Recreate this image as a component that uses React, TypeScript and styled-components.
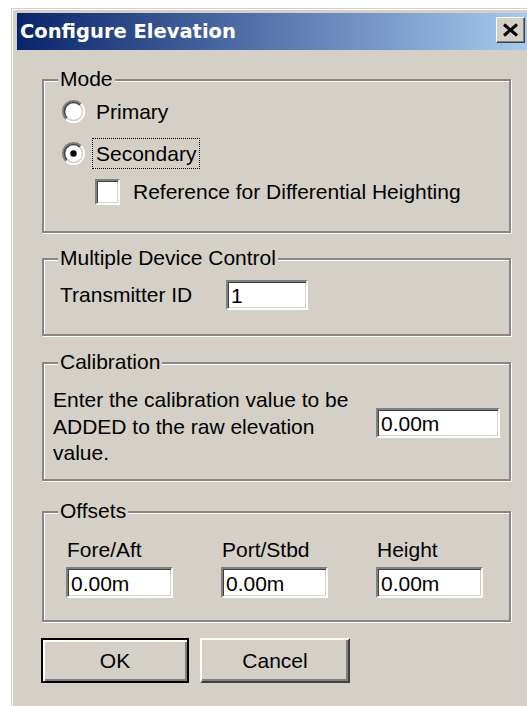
import React from 'react'
import styled, { createGlobalStyle } from 'styled-components'

const FACE = '#d4d0c8'
const SHADOW = '#808080'
const DARK = '#404040'

const GlobalStyle = createGlobalStyle`
  html, body {
    margin: 0;
    padding: 0;
    background: #fff;
    overflow: hidden;
  }
  body {
    font-family: "Liberation Sans", Arial, sans-serif;
    font-size: 21px;
    color: #000;
  }
`

const Dialog = styled.div`
  box-sizing: border-box;
  width: 524px;
  min-height: 720px;
  margin: 8px 0 0 11px;
  padding: 5px 6px 0;
  background: ${FACE};
  box-shadow: inset 1px 1px 0 ${FACE}, inset 2px 2px 0 #fff;
`

const TitleBar = styled.div`
  display: flex;
  align-items: flex-start;
  height: 37px;
  padding: 0 4px 0 3px;
  background: linear-gradient(to right, #0a246a, #a6caf0);
`

const TitleText = styled.span`
  align-self: center;
  font-family: "DejaVu Sans", Tahoma, sans-serif;
  font-weight: bold;
  font-size: 19.5px;
  color: #fff;
`

const CloseButton = styled.div`
  box-sizing: border-box;
  display: flex;
  align-items: center;
  justify-content: center;
  width: 29px;
  height: 26px;
  margin: 4px 0 0 auto;
  background: ${FACE};
  border: 1px solid;
  border-color: #fff ${DARK} ${DARK} #fff;
  box-shadow: inset -1px -1px 0 ${SHADOW};
`

const Content = styled.div`
  display: flex;
  flex-direction: column;
  padding: 29px 0 0 25px;
`

const GroupBox = styled.div<{ $height: number; $gap?: number }>`
  position: relative;
  box-sizing: border-box;
  width: 469px;
  height: ${(p) => p.$height}px;
  margin-top: ${(p) => p.$gap ?? 0}px;
  border: 2px solid #878787;
  box-shadow: inset 1px 1px 0 #fff, 1px 1px 0 #fff;
`

const Legend = styled.span`
  position: absolute;
  top: -13px;
  left: 14px;
  padding: 0 2px;
  line-height: 22px;
  background: ${FACE};
`

const ModeBody = styled.div`
  padding: 9px 0 0 18px;
`

const OptionRow = styled.div<{ $height: number; $indent?: number }>`
  display: flex;
  align-items: center;
  height: ${(p) => p.$height}px;
  padding-left: ${(p) => p.$indent ?? 0}px;
`

const OptionLabel = styled.span<{ $focused?: boolean }>`
  box-sizing: border-box;
  margin-left: 7px;
  padding: 0 3px 0 3px;
  line-height: 29px;
  border: 1px dotted ${(p) => (p.$focused ? '#000' : 'transparent')};
`

const CheckLabel = styled.span`
  margin-left: 13px;
`

const CheckBox = styled.div`
  box-sizing: border-box;
  width: 25px;
  height: 26px;
  background: #fff;
  border: 2px solid;
  border-color: ${SHADOW} #fff #fff ${SHADOW};
  box-shadow: inset 1px 1px 0 ${DARK}, inset -1px -1px 0 ${FACE};
`

const FieldRow = styled.div`
  display: flex;
  align-items: center;
  padding: 20px 0 0 16px;
`

const FieldLabel = styled.span<{ $width: number }>`
  width: ${(p) => p.$width}px;
`

const TextBox = styled.input<{ $width: number; $height?: number }>`
  box-sizing: border-box;
  width: ${(p) => p.$width}px;
  height: ${(p) => p.$height ?? 30}px;
  margin: 0;
  padding: 2px 0 0 3px;
  font-family: "Liberation Sans", Arial, sans-serif;
  font-size: 21px;
  color: #000;
  background: #fff;
  border: 2px solid;
  border-color: ${SHADOW} #fff #fff ${SHADOW};
  box-shadow: inset 1px 1px 0 ${DARK}, inset -1px -1px 0 ${FACE};
  outline: none;
`

const CalibrationRow = styled.div`
  display: flex;
  align-items: flex-start;
  padding: 23px 9px 0 9px;
`

const CalibrationText = styled.div`
  line-height: 26.5px;
`

const CalibrationInput = styled(TextBox)`
  margin-top: 21px;
  margin-left: auto;
`

const OffsetColumns = styled.div`
  display: flex;
  gap: 48px;
  padding: 24px 0 0 22px;
`

const OffsetColumn = styled.div`
  display: flex;
  flex-direction: column;
  width: 107px;
`

const OffsetLabel = styled.span`
  padding-left: 1px;
  line-height: 26px;
`

const OffsetInput = styled(TextBox)`
  margin-top: 4px;
`

const ButtonRow = styled.div`
  display: flex;
  gap: 11px;
  margin: 16px 0 0 -1px;
`

const Button = styled.button<{ $width: number; $default?: boolean }>`
  box-sizing: border-box;
  width: ${(p) => p.$width}px;
  height: 45px;
  padding: 0;
  font-family: "Liberation Sans", Arial, sans-serif;
  font-size: 21px;
  color: #000;
  background: ${FACE};
  border: 2px solid;
  border-color: ${(p) => (p.$default ? '#000' : `#fff ${DARK} ${DARK} #fff`)};
  box-shadow: ${(p) =>
    p.$default
      ? `inset 2px 2px 0 #fff, inset -2px -2px 0 ${SHADOW}`
      : `inset -2px -2px 0 ${SHADOW}`};
`

const Radio = ({ checked }: { checked?: boolean }) => {
  const c = 11.5
  // half ring: lower-left to upper-right through the top-left side (or the other half)
  const arc = (r: number, topLeft: boolean) => {
    const d = r * Math.SQRT1_2
    const a = topLeft ? [c - d, c + d] : [c + d, c - d]
    const b = topLeft ? [c + d, c - d] : [c - d, c + d]
    return `M${a[0]} ${a[1]} A${r} ${r} 0 0 1 ${b[0]} ${b[1]}`
  }
  return (
    <svg width="23" height="23" viewBox="0 0 23 23">
      <circle cx={c} cy={c} r={9.5} fill="#fff" />
      <path d={arc(10.5, true)} stroke={SHADOW} strokeWidth="2" fill="none" />
      <path d={arc(9, true)} stroke={DARK} strokeWidth="1.5" fill="none" />
      <path d={arc(10.5, false)} stroke="#fff" strokeWidth="2" fill="none" />
      <path d={arc(9, false)} stroke={FACE} strokeWidth="1.5" fill="none" />
      {checked && <circle cx={c} cy={c} r={3.2} fill="#000" />}
    </svg>
  )
}

const offsets = ['Fore/Aft', 'Port/Stbd', 'Height']

export default function App() {
  return (
    <>
      <GlobalStyle />
      <Dialog>
        <TitleBar>
          <TitleText>Configure Elevation</TitleText>
          <CloseButton>
            <svg width="17" height="14" viewBox="0 0 17 14">
              <path d="M2 1.5 L15 12.5 M15 1.5 L2 12.5" stroke="#000" strokeWidth="3" />
            </svg>
          </CloseButton>
        </TitleBar>

        <Content>
          <GroupBox $height={154}>
            <Legend>Mode</Legend>
            <ModeBody>
              <OptionRow $height={42}>
                <Radio />
                <OptionLabel>Primary</OptionLabel>
              </OptionRow>
              <OptionRow $height={42}>
                <Radio checked />
                <OptionLabel $focused>Secondary</OptionLabel>
              </OptionRow>
              <OptionRow $height={36} $indent={33}>
                <CheckBox />
                <CheckLabel>Reference for Differential Heighting</CheckLabel>
              </OptionRow>
            </ModeBody>
          </GroupBox>

          <GroupBox $height={78} $gap={25}>
            <Legend>Multiple Device Control</Legend>
            <FieldRow>
              <FieldLabel $width={166}>Transmitter ID</FieldLabel>
              <TextBox $width={82} defaultValue="1" />
            </FieldRow>
          </GroupBox>

          <GroupBox $height={119} $gap={26}>
            <Legend>Calibration</Legend>
            <CalibrationRow>
              <CalibrationText>
                Enter the calibration value to be
                <br />
                ADDED to the raw elevation
                <br />
                value.
              </CalibrationText>
              <CalibrationInput $width={124} defaultValue="0.00m" />
            </CalibrationRow>
          </GroupBox>

          <GroupBox $height={111} $gap={30}>
            <Legend>Offsets</Legend>
            <OffsetColumns>
              {offsets.map((name) => (
                <OffsetColumn key={name}>
                  <OffsetLabel>{name}</OffsetLabel>
                  <OffsetInput $width={107} $height={31} defaultValue="0.00m" />
                </OffsetColumn>
              ))}
            </OffsetColumns>
          </GroupBox>

          <ButtonRow>
            <Button $width={148} $default>
              OK
            </Button>
            <Button $width={150}>Cancel</Button>
          </ButtonRow>
        </Content>
      </Dialog>
    </>
  )
}
